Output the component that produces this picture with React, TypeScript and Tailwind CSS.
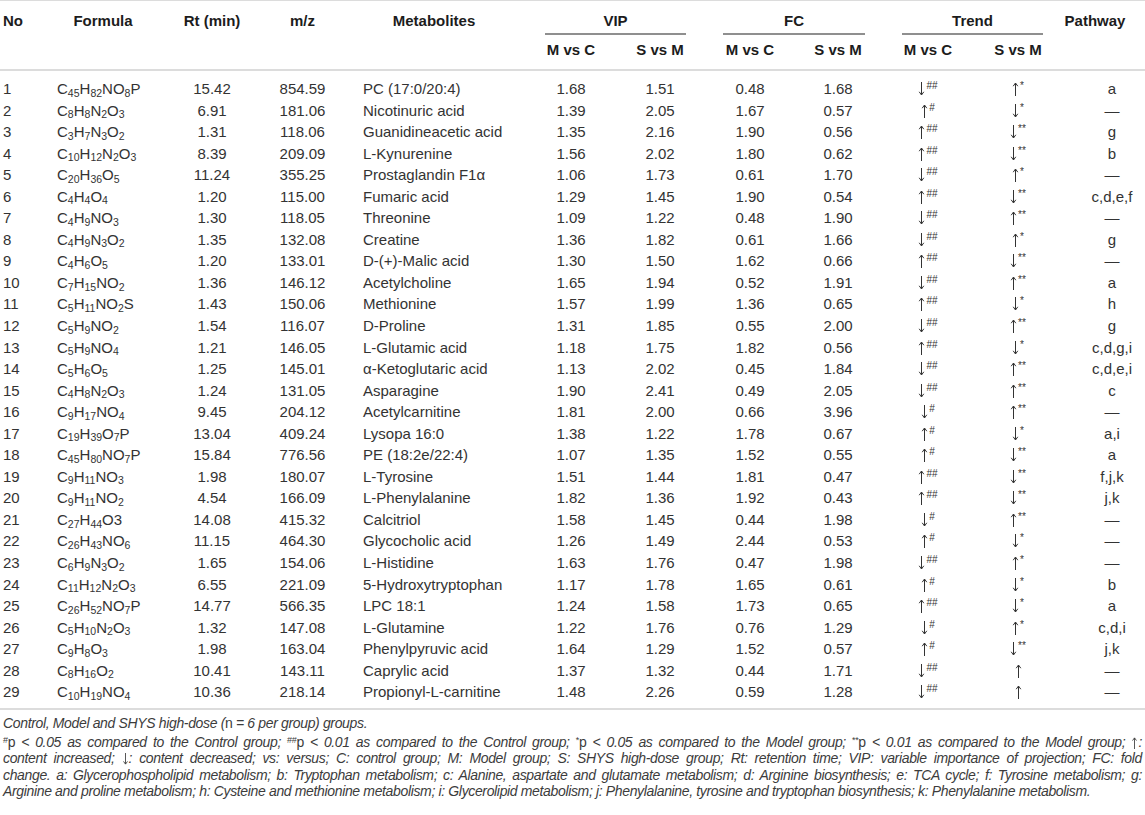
import React from "react";

type Row = [string, string, string, string, string, string, string, string, string, string, string, string];

// formula: "_" marks digits that are subscript
const rows: Row[] = [
  ["1", "C_45H_82NO_8P", "15.42", "854.59", "PC (17:0/20:4)", "1.68", "1.51", "0.48", "1.68", "↓##", "↑*", "a"],
  ["2", "C_8H_8N_2O_3", "6.91", "181.06", "Nicotinuric acid", "1.39", "2.05", "1.67", "0.57", "↑#", "↓*", "—"],
  ["3", "C_3H_7N_3O_2", "1.31", "118.06", "Guanidineacetic acid", "1.35", "2.16", "1.90", "0.56", "↑##", "↓**", "g"],
  ["4", "C_10H_12N_2O_3", "8.39", "209.09", "L-Kynurenine", "1.56", "2.02", "1.80", "0.62", "↑##", "↓**", "b"],
  ["5", "C_20H_36O_5", "11.24", "355.25", "Prostaglandin F1α", "1.06", "1.73", "0.61", "1.70", "↓##", "↑*", "—"],
  ["6", "C_4H_4O_4", "1.20", "115.00", "Fumaric acid", "1.29", "1.45", "1.90", "0.54", "↑##", "↓**", "c,d,e,f"],
  ["7", "C_4H_9NO_3", "1.30", "118.05", "Threonine", "1.09", "1.22", "0.48", "1.90", "↓##", "↑**", "—"],
  ["8", "C_4H_9N_3O_2", "1.35", "132.08", "Creatine", "1.36", "1.82", "0.61", "1.66", "↓##", "↑*", "g"],
  ["9", "C_4H_6O_5", "1.20", "133.01", "D-(+)-Malic acid", "1.30", "1.50", "1.62", "0.66", "↑##", "↓**", "—"],
  ["10", "C_7H_15NO_2", "1.36", "146.12", "Acetylcholine", "1.65", "1.94", "0.52", "1.91", "↓##", "↑**", "a"],
  ["11", "C_5H_11NO_2S", "1.43", "150.06", "Methionine", "1.57", "1.99", "1.36", "0.65", "↑##", "↓*", "h"],
  ["12", "C_5H_9NO_2", "1.54", "116.07", "D-Proline", "1.31", "1.85", "0.55", "2.00", "↓##", "↑**", "g"],
  ["13", "C_5H_9NO_4", "1.21", "146.05", "L-Glutamic acid", "1.18", "1.75", "1.82", "0.56", "↑##", "↓*", "c,d,g,i"],
  ["14", "C_5H_6O_5", "1.25", "145.01", "α-Ketoglutaric acid", "1.13", "2.02", "0.45", "1.84", "↓##", "↑**", "c,d,e,i"],
  ["15", "C_4H_8N_2O_3", "1.24", "131.05", "Asparagine", "1.90", "2.41", "0.49", "2.05", "↓##", "↑**", "c"],
  ["16", "C_9H_17NO_4", "9.45", "204.12", "Acetylcarnitine", "1.81", "2.00", "0.66", "3.96", "↓#", "↑**", "—"],
  ["17", "C_19H_39O_7P", "13.04", "409.24", "Lysopa 16:0", "1.38", "1.22", "1.78", "0.67", "↑#", "↓*", "a,i"],
  ["18", "C_45H_80NO_7P", "15.84", "776.56", "PE (18:2e/22:4)", "1.07", "1.35", "1.52", "0.55", "↑#", "↓**", "a"],
  ["19", "C_9H_11NO_3", "1.98", "180.07", "L-Tyrosine", "1.51", "1.44", "1.81", "0.47", "↑##", "↓**", "f,j,k"],
  ["20", "C_9H_11NO_2", "4.54", "166.09", "L-Phenylalanine", "1.82", "1.36", "1.92", "0.43", "↑##", "↓**", "j,k"],
  ["21", "C_27H_44O3", "14.08", "415.32", "Calcitriol", "1.58", "1.45", "0.44", "1.98", "↓#", "↑**", "—"],
  ["22", "C_26H_43NO_6", "11.15", "464.30", "Glycocholic acid", "1.26", "1.49", "2.44", "0.53", "↑#", "↓*", "—"],
  ["23", "C_6H_9N_3O_2", "1.65", "154.06", "L-Histidine", "1.63", "1.76", "0.47", "1.98", "↓##", "↑*", "—"],
  ["24", "C_11H_12N_2O_3", "6.55", "221.09", "5-Hydroxytryptophan", "1.17", "1.78", "1.65", "0.61", "↑#", "↓*", "b"],
  ["25", "C_26H_52NO_7P", "14.77", "566.35", "LPC 18:1", "1.24", "1.58", "1.73", "0.65", "↑##", "↓*", "a"],
  ["26", "C_5H_10N_2O_3", "1.32", "147.08", "L-Glutamine", "1.22", "1.76", "0.76", "1.29", "↓#", "↑*", "c,d,i"],
  ["27", "C_9H_8O_3", "1.98", "163.04", "Phenylpyruvic acid", "1.64", "1.29", "1.52", "0.57", "↑#", "↓**", "j,k"],
  ["28", "C_8H_16O_2", "10.41", "143.11", "Caprylic acid", "1.37", "1.32", "0.44", "1.71", "↓##", "↑", "—"],
  ["29", "C_10H_19NO_4", "10.36", "218.14", "Propionyl-L-carnitine", "1.48", "2.26", "0.59", "1.28", "↓##", "↑", "—"],
];

const Formula = ({ f }: { f: string }) => {
  const parts = f.split(/(_\d+)/).filter(Boolean);
  return (
    <>
      {parts.map((p, i) =>
        p.startsWith("_") ? (
          <sub key={i} className="text-[10.5px]">
            {p.slice(1)}
          </sub>
        ) : (
          <span key={i}>{p}</span>
        )
      )}
    </>
  );
};

// thin tall arrow, the font's own arrow glyph is too small
const Arrow = ({ up, h = 14 }: { up: boolean; h?: number }) => (
  <svg
    width={7}
    height={h}
    viewBox="0 0 7 14"
    className="inline-block align-[-2px]"
    fill="none"
    stroke="currentColor"
    strokeWidth={1}
  >
    {up ? (
      <>
        <path d="M3.5 1.2V14" />
        <path d="M1.2 4.2L3.5 1L5.8 4.2" />
      </>
    ) : (
      <>
        <path d="M3.5 0V12.8" />
        <path d="M1.2 9.8L3.5 13L5.8 9.8" />
      </>
    )}
  </svg>
);

const Trend = ({ t }: { t: string }) => (
  <>
    <Arrow up={t[0] === "↑"} />
    {t.length > 1 && <sup className="text-[10px] ml-[1px]">{t.slice(1)}</sup>}
  </>
);

const Sup = ({ children }: { children: React.ReactNode }) => (
  <sup className="text-[9px] not-italic">{children}</sup>
);
const P = () => <span className="not-italic">p</span>;

const th = "font-bold text-[15px] leading-[20px] text-[#1c1c1c] whitespace-nowrap";

export default function App() {
  return (
    <div className="w-[1145px] bg-white font-['Liberation_Sans',Arial,sans-serif] text-[#333]">
      <table className="w-[1145px] table-fixed border-collapse">
        <colgroup>
          <col className="w-[50px]" />
          <col className="w-[106px]" />
          <col className="w-[112px]" />
          <col className="w-[69px]" />
          <col className="w-[194px]" />
          <col className="w-[80px]" />
          <col className="w-[98px]" />
          <col className="w-[82px]" />
          <col className="w-[94px]" />
          <col className="w-[86px]" />
          <col className="w-[74px]" />
          <col className="w-[100px]" />
        </colgroup>
        <thead className="border-t border-b-2 border-[#dcdcdc]">
          <tr>
            <th rowSpan={2} className={`${th} align-top text-left pl-[3px] pt-[10px]`}>No</th>
            <th rowSpan={2} className={`${th} align-top text-center pt-[10px]`}>Formula</th>
            <th rowSpan={2} className={`${th} align-top text-center pt-[10px]`}>Rt (min)</th>
            <th rowSpan={2} className={`${th} align-top text-center pt-[10px]`}>m/z</th>
            <th rowSpan={2} className={`${th} align-top text-center pt-[10px]`}>Metabolites</th>
            <th colSpan={2} className={`${th} align-top pt-[10px] h-[34px]`}>
              <div className="ml-[14px] mr-[23px] border-b-2 border-[#8f8f8f] pb-[2px] text-center">VIP</div>
            </th>
            <th colSpan={2} className={`${th} align-top pt-[10px]`}>
              <div className="ml-[14px] mr-[20px] border-b-2 border-[#8f8f8f] pb-[2px] text-center">FC</div>
            </th>
            <th colSpan={2} className={`${th} align-top pt-[10px]`}>
              <div className="ml-[17px] mr-[2px] border-b-2 border-[#8f8f8f] pb-[2px] text-center">Trend</div>
            </th>
            <th rowSpan={2} className={`${th} align-top text-center pt-[10px]`}>Pathway</th>
          </tr>
          <tr>
            <th className={`${th} text-center pt-[5px] pb-[9px]`}>M vs C</th>
            <th className={`${th} text-center pt-[5px] pb-[9px]`}>S vs M</th>
            <th className={`${th} text-center pt-[5px] pb-[9px]`}>M vs C</th>
            <th className={`${th} text-center pt-[5px] pb-[9px]`}>S vs M</th>
            <th className={`${th} text-center pt-[5px] pb-[9px]`}>M vs C</th>
            <th className={`${th} text-center pt-[5px] pb-[9px] pl-[20px]`}>S vs M</th>
          </tr>
        </thead>
        <tbody className="border-b-2 border-[#dcdcdc] text-[15px] leading-[21.54px] whitespace-nowrap">
          <tr className="h-[8px]">
            <td colSpan={12} />
          </tr>
          {rows.map((r) => (
            <tr key={r[0]}>
              <td className="pl-[3px] text-left">{r[0]}</td>
              <td className="pl-[7px] text-left">
                <Formula f={r[1]} />
              </td>
              <td className="text-center">{r[2]}</td>
              <td className="text-center">{r[3]}</td>
              <td className="pl-[26px] text-left">{r[4]}</td>
              <td className="text-center">{r[5]}</td>
              <td className="text-center">{r[6]}</td>
              <td className="text-center">{r[7]}</td>
              <td className="text-center">{r[8]}</td>
              <td className="text-center">
                <Trend t={r[9]} />
              </td>
              <td className="pl-[20px] text-center">
                <Trend t={r[10]} />
              </td>
              <td className="pl-[34px] text-center">{r[11]}</td>
            </tr>
          ))}
          <tr className="h-[6px]">
            <td colSpan={12} />
          </tr>
        </tbody>
      </table>

      <div className="px-[3px] pt-[5px] text-[14px] tracking-[-0.35px] leading-[16.3px] italic text-[#3c3c3c]">
        <p>
          Control, Model and SHYS high-dose (<span className="not-italic">n</span> = 6 per group) groups.
        </p>
        <div className="mt-[3px] text-justify [text-align-last:justify]">
          <Sup>#</Sup>
          <P /> &lt; 0.05 as compared to the Control group; <Sup>##</Sup>
          <P /> &lt; 0.01 as compared to the Control group; <Sup>*</Sup>
          <P /> &lt; 0.05 as compared to the Model group; <Sup>**</Sup>
          <P /> &lt; 0.01 as compared to the Model group; <Arrow up h={12} />:
        </div>
        <div className="text-justify [text-align-last:justify]">
          content increased; <Arrow up={false} h={12} />: content decreased; vs: versus; C: control group; M: Model group; S: SHYS high-dose group; Rt: retention time; VIP: variable importance of projection; FC: fold
        </div>
        <div className="text-justify [text-align-last:justify]">
          change. a: Glycerophospholipid metabolism; b: Tryptophan metabolism; c: Alanine, aspartate and glutamate metabolism; d: Arginine biosynthesis; e: TCA cycle; f: Tyrosine metabolism; g:
        </div>
        <div>
          Arginine and proline metabolism; h: Cysteine and methionine metabolism; i: Glycerolipid metabolism; j: Phenylalanine, tyrosine and tryptophan biosynthesis; k: Phenylalanine metabolism.
        </div>
      </div>
    </div>
  );
}
